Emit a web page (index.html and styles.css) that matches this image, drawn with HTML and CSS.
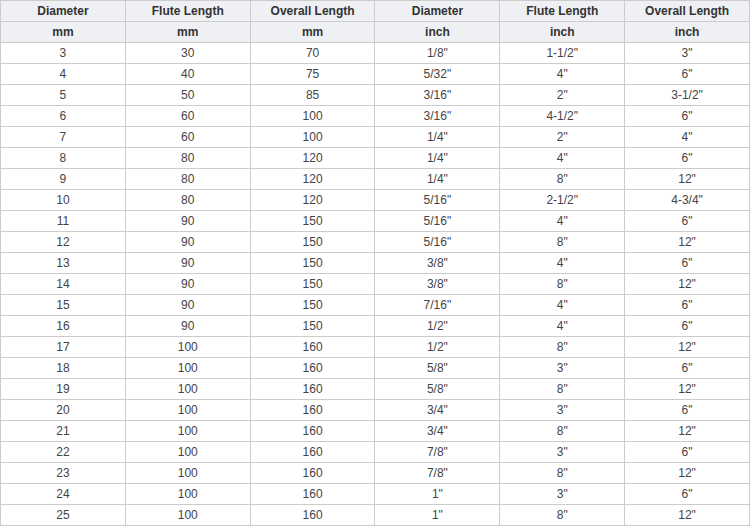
FILE: index.html
```html
<!DOCTYPE html>
<html>
<head>
<meta charset="utf-8">
<link rel="stylesheet" href="styles.css">
</head>
<body>
<table class="spec">
<colgroup><col><col><col><col><col><col></colgroup>
<thead>
<tr class="head"><th>Diameter</th><th>Flute Length</th><th>Overall Length</th><th>Diameter</th><th>Flute Length</th><th>Overall Length</th></tr>
<tr class="head"><th>mm</th><th>mm</th><th>mm</th><th>inch</th><th>inch</th><th>inch</th></tr>
</thead>
<tbody>
<tr><td>3</td><td>30</td><td>70</td><td>1/8"</td><td>1-1/2"</td><td>3"</td></tr>
<tr><td>4</td><td>40</td><td>75</td><td>5/32"</td><td>4"</td><td>6"</td></tr>
<tr><td>5</td><td>50</td><td>85</td><td>3/16"</td><td>2"</td><td>3-1/2"</td></tr>
<tr><td>6</td><td>60</td><td>100</td><td>3/16"</td><td>4-1/2"</td><td>6"</td></tr>
<tr><td>7</td><td>60</td><td>100</td><td>1/4"</td><td>2"</td><td>4"</td></tr>
<tr><td>8</td><td>80</td><td>120</td><td>1/4"</td><td>4"</td><td>6"</td></tr>
<tr><td>9</td><td>80</td><td>120</td><td>1/4"</td><td>8"</td><td>12"</td></tr>
<tr><td>10</td><td>80</td><td>120</td><td>5/16"</td><td>2-1/2"</td><td>4-3/4"</td></tr>
<tr><td>11</td><td>90</td><td>150</td><td>5/16"</td><td>4"</td><td>6"</td></tr>
<tr><td>12</td><td>90</td><td>150</td><td>5/16"</td><td>8"</td><td>12"</td></tr>
<tr><td>13</td><td>90</td><td>150</td><td>3/8"</td><td>4"</td><td>6"</td></tr>
<tr><td>14</td><td>90</td><td>150</td><td>3/8"</td><td>8"</td><td>12"</td></tr>
<tr><td>15</td><td>90</td><td>150</td><td>7/16"</td><td>4"</td><td>6"</td></tr>
<tr><td>16</td><td>90</td><td>150</td><td>1/2"</td><td>4"</td><td>6"</td></tr>
<tr><td>17</td><td>100</td><td>160</td><td>1/2"</td><td>8"</td><td>12"</td></tr>
<tr><td>18</td><td>100</td><td>160</td><td>5/8"</td><td>3"</td><td>6"</td></tr>
<tr><td>19</td><td>100</td><td>160</td><td>5/8"</td><td>8"</td><td>12"</td></tr>
<tr><td>20</td><td>100</td><td>160</td><td>3/4"</td><td>3"</td><td>6"</td></tr>
<tr><td>21</td><td>100</td><td>160</td><td>3/4"</td><td>8"</td><td>12"</td></tr>
<tr><td>22</td><td>100</td><td>160</td><td>7/8"</td><td>3"</td><td>6"</td></tr>
<tr><td>23</td><td>100</td><td>160</td><td>7/8"</td><td>8"</td><td>12"</td></tr>
<tr><td>24</td><td>100</td><td>160</td><td>1"</td><td>3"</td><td>6"</td></tr>
<tr><td>25</td><td>100</td><td>160</td><td>1"</td><td>8"</td><td>12"</td></tr>
</tbody>
</table>
</body>
</html>
```
FILE: styles.css
```css
html, body {
  margin: 0;
  padding: 0;
  background: #ffffff;
}
.spec {
  border-collapse: collapse;
  table-layout: fixed;
  width: 750px;
  font-family: "Liberation Sans", Arial, sans-serif;
  font-size: 12px;
  color: #444444;
}
.spec th, .spec td {
  border: 1px solid #cccccc;
  height: 20px;
  padding: 0;
  text-align: center;
  vertical-align: middle;
  line-height: 20px;
}
.spec th {
  background: #eef0f3;
  color: #333333;
  font-weight: bold;
}
```
